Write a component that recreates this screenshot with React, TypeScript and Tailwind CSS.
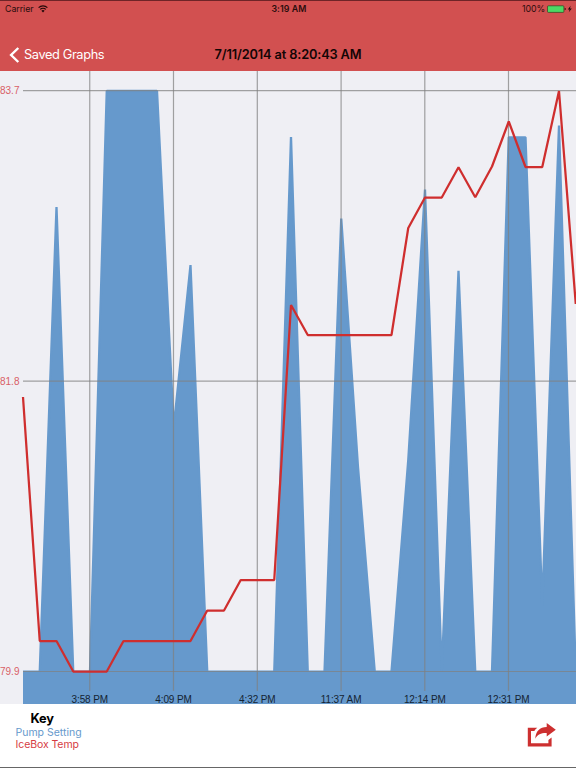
import React from "react";

const STEP = 16.75;
const LEFT = 23;
const TOP = 71;

const BASE = 671.6;
const pump = [
  BASE, BASE, 207, BASE, BASE, 91, 91, 91, 91, 427, 265, BASE, BASE, BASE, BASE, BASE, 137,
  BASE, BASE, 218.5, 467, BASE, BASE, 460, 189.5, BASE, 270.7, BASE, BASE, 137.3, 137.3, 606, 125.5, BASE,
];
const temp = [
  397, 641, 641, 671.5, 671.5, 671.5, 641, 641, 641, 641, 641, 610.5, 610.5, 580, 580, 580, 305,
  335, 335, 335, 335, 335, 335, 228, 197.5, 197.5, 167.3, 197.3, 166.5, 121.5, 167, 167, 91, 304,
];

const toPoints = (values: number[]) =>
  values.map((y, i) => `${(LEFT + i * STEP).toFixed(2)},${y - TOP}`).join(" ");

const times = [
  { x: 89.75, label: "3:58 PM" },
  { x: 173.5, label: "4:09 PM" },
  { x: 257.3, label: "4:32 PM" },
  { x: 341.1, label: "11:37 AM" },
  { x: 424.8, label: "12:14 PM" },
  { x: 508.5, label: "12:31 PM" },
];
const levels = [
  { y: 90.6, label: "83.7" },
  { y: 381.1, label: "81.8" },
  { y: 671.5, label: "79.9" },
];

function StatusBar() {
  return (
    <div className="grid h-[16px] grid-cols-3 items-center pl-[5px] pr-[3px] text-[8.8px] leading-none text-[#2b0d0d]">
      <div className="flex items-center gap-[4px]">
        <span className="tracking-[-.05px]">Carrier</span>
        <svg width="10" height="8" viewBox="0 0 10 8" fill="none" stroke="#210808" strokeWidth="1.2">
          <path d="M.6 2.7a6.2 6.2 0 0 1 8.8 0M2.2 4.4a4 4 0 0 1 5.6 0" />
          <path d="M3.4 5.7a2.3 2.3 0 0 1 3.2 0L5 7.4z" fill="#210808" stroke="none" />
        </svg>
      </div>
      <div className="text-center font-semibold tracking-[.1px]">3:19 AM</div>
      <div className="flex items-center justify-end">
        <span className="mr-[2px] tracking-[-.1px]">100%</span>
        <svg width="26" height="8" viewBox="0 0 26 8">
          <rect x=".5" y=".8" width="16.4" height="6.6" rx=".9" fill="#4cd964" stroke="#3b3a20" strokeWidth=".7" />
          <path d="M17.7 2.7q1.1.2 1.1 1.3t-1.1 1.3z" fill="#210808" />
          <path d="M23.6.8 20.8 4.4h1.8L21.8 7.3l3-3.8h-1.8z" fill="#210808" />
        </svg>
      </div>
    </div>
  );
}

function Header() {
  return (
    <header className="h-[71px] border-t border-[#6e2427] bg-[#d25050]">
      <StatusBar />
      <div className="mt-[22px] grid h-[32px] grid-cols-[1fr_auto_1fr] items-center">
        <div className="flex items-center gap-[4px] pl-[9px] text-[12.8px] leading-none text-white">
          <svg width="11" height="16" viewBox="0 0 11 16" fill="none" stroke="white" strokeWidth="2.4">
            <path d="M9.3 1 2.1 8l7.2 7" />
          </svg>
          <span className="tracking-[-.38px]">Saved Graphs</span>
        </div>
        <h1 className="text-[12.8px] font-semibold leading-none tracking-[-.15px] text-[#130505]">
          7/11/2014 at 8:20:43 AM
        </h1>
        <span />
      </div>
    </header>
  );
}

function Chart() {
  const right = LEFT + 33 * STEP;
  const area = `${LEFT},650 ${toPoints(pump)} 577,600.6 577,650 ${right},650`;
  return (
    <svg className="block bg-[#efeff4]" width="576" height="633" viewBox="0 0 576 633">
      <polygon points={area} fill="#6699cc" />
      <polyline points={toPoints(pump)} fill="none" stroke="#6699cc" strokeWidth="2.3" strokeLinejoin="bevel" />
      <g stroke="#808080" strokeOpacity=".72" strokeWidth="1.2">
        {times.map((t) => (
          <line key={t.label} x1={t.x} x2={t.x} y1="0" y2="620" />
        ))}
        {levels.map((l) => (
          <line key={l.label} x1={LEFT} x2="576" y1={l.y - TOP} y2={l.y - TOP} />
        ))}
      </g>
      <polyline points={toPoints(temp)} fill="none" stroke="#cf2e2e" strokeWidth="2.25" strokeLinejoin="bevel" />
      <g fontFamily="'Liberation Sans', Arial, sans-serif" fontSize="10">
        {levels.map((l) => (
          <text key={l.label} x="0" y={l.y - TOP + 3.8} fill="#d95f66">
            {l.label}
          </text>
        ))}
        {times.map((t) => (
          <text key={t.label} x={t.x} y="632" textAnchor="middle" fill="#152433" letterSpacing="-.12">
            {t.label}
          </text>
        ))}
      </g>
    </svg>
  );
}

function ShareIcon() {
  return (
    <svg width="30" height="26" viewBox="0 0 30 26" fill="#cd3030">
      <path d="M.8 5.8H10.3Q8.3 7 7.3 9H4V21.3H21.4V18l3.2-2.6V24.5H.8z" />
      <path d="M8.3 16.8C8.4 9.3 12.8 5 19.7 4.9V1L28.8 7.8l-9.1 6.8V11C14.5 10.8 10.6 12.2 8.3 16.8z" />
    </svg>
  );
}

export default function App() {
  return (
    <div className="flex h-[768px] w-[576px] flex-col overflow-hidden bg-white font-['Inter','Liberation_Sans',sans-serif]">
      <Header />
      <Chart />
      <footer className="flex flex-1 justify-between border-b border-[#666] pl-[15.5px] pr-[19px]">
        <div className="pt-[7px] text-[10.5px] leading-[12px]">
          <div className="pl-[15px] text-[12.8px] font-bold leading-[16px] tracking-[-.2px] text-black">Key</div>
          <div className="text-[#6699cc]">Pump Setting</div>
          <div className="tracking-[-.08px] text-[#d63b42]">IceBox Temp</div>
        </div>
        <button className="flex items-start pt-[17.5px]" aria-label="Share">
          <ShareIcon />
        </button>
      </footer>
    </div>
  );
}
